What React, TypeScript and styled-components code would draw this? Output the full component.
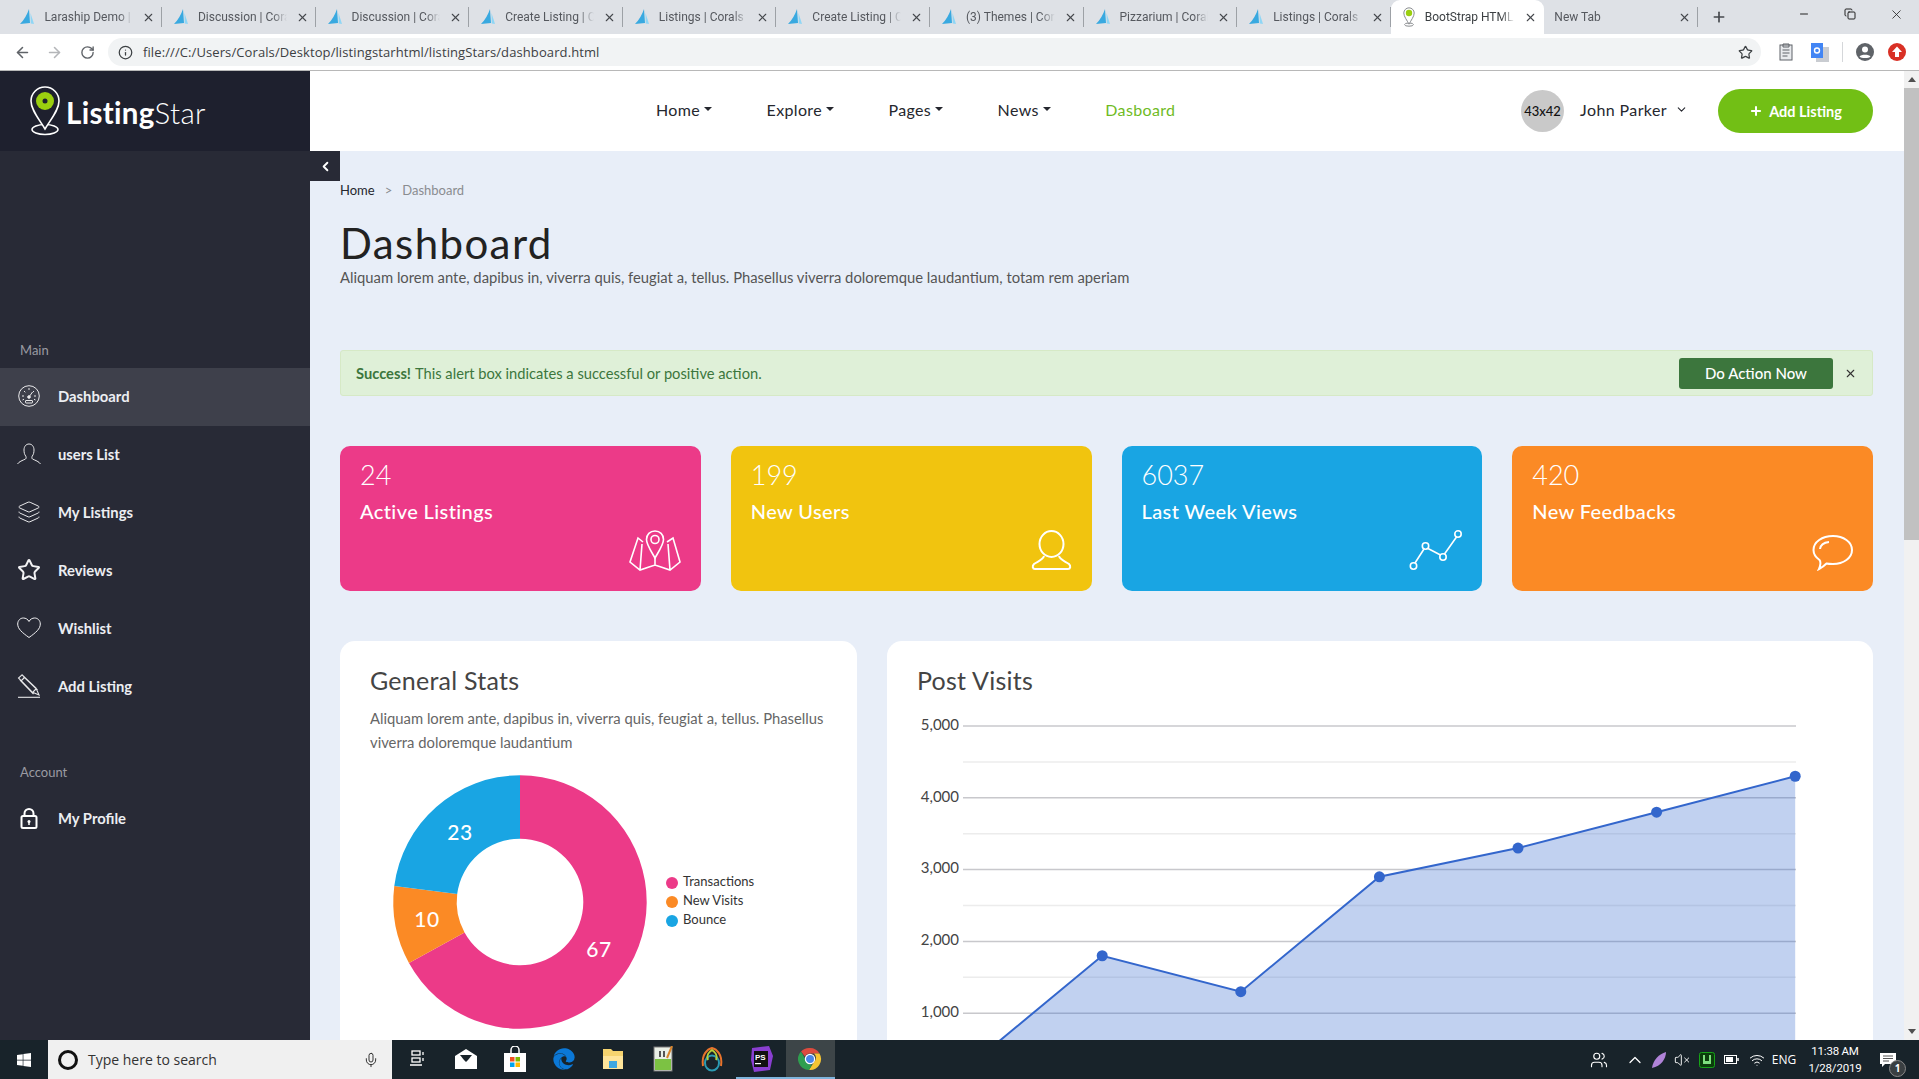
import React from 'react';
import styled, { createGlobalStyle } from 'styled-components';
import { ArrowLeft, ArrowRight, RotateCw, Info, Star, X, Plus, Minus, Copy, ChevronLeft, ChevronDown, ChevronUp, Mic, Layers, VolumeX, Wifi, Users } from 'lucide-react';
import { FaWindows, FaEdge } from 'react-icons/fa';

const GlobalStyle = createGlobalStyle`
  * { box-sizing: border-box; }
  html, body { margin: 0; height: 100%; overflow: hidden; }
  body { font-family: "Lato", "Liberation Sans", sans-serif; }
`;

const Screen = styled.div`
  height: 1079px;
  width: 1919px;
  display: flex;
  flex-direction: column;
  overflow: hidden;
`;

/* browser chrome */
const TabStrip = styled.div`
  height: 34px;
  background: #dee1e6;
  display: flex;
  padding-left: 8.4px;
  font-family: "Roboto", sans-serif;
`;
const Tab = styled.div<{ $active?: boolean; $plain?: boolean }>`
  width: 153.6px;
  height: 34px;
  display: flex;
  align-items: center;
  gap: 9px;
  padding: 0 7px 0 ${(p) => (p.$plain ? '10px' : '11px')};
  font-size: 12px;
  color: ${(p) => (p.$active ? '#3c4043' : '#55585e')};
  background: ${(p) => (p.$active ? '#fff' : 'transparent')};
  border-radius: ${(p) => (p.$active ? '9px 9px 0 0' : '0')};
  position: relative;
  &::after {
    content: '';
    position: absolute;
    right: 0;
    top: 7px;
    bottom: 7px;
    width: 1px;
    background: ${(p) => (p.$active ? 'transparent' : '#9da1a6')};
  }
`;
const TabTitle = styled.span`
  flex: 1;
  white-space: nowrap;
  overflow: hidden;
  -webkit-mask-image: linear-gradient(to right, #000 84%, transparent);
  mask-image: linear-gradient(to right, #000 84%, transparent);
`;
const NewTabBtn = styled.div`
  width: 42px;
  display: flex;
  align-items: center;
  justify-content: center;
  color: #45484d;
`;
const WindowControls = styled.div`
  margin-left: auto;
  display: flex;
  align-items: center;
  color: #222;
`;
const WindowBtn = styled.div`
  width: 46px;
  height: 28px;
  margin-top: -6px;
  display: flex;
  align-items: center;
  justify-content: center;
`;
const Toolbar = styled.div`
  height: 37px;
  background: #fff;
  border-bottom: 1px solid #b8b8b8;
  display: flex;
  align-items: center;
  padding: 0 0 0 13px;
  color: #5f6368;
`;
const ToolIcon = styled.div<{ $w?: number; $muted?: boolean }>`
  width: ${(p) => p.$w ?? 32}px;
  display: flex;
  justify-content: center;
  color: ${(p) => (p.$muted ? '#b4b6b9' : '#5f6368')};
`;
const Omnibox = styled.div`
  flex: none;
  width: 1653px;
  height: 28px;
  margin-left: 11px;
  border-radius: 14px;
  background: #f1f3f4;
  display: flex;
  align-items: center;
  padding: 0 8px 0 10px;
  gap: 10px;
  font: 13px "Open Sans", sans-serif;
  letter-spacing: 0.1px;
  color: #3c4043;
`;
const Url = styled.span`
  flex: 1;
`;
const ToolSep = styled.div`
  width: 1px;
  height: 20px;
  background: #d5d7da;
  margin: 0 8px 0 13px;
`;

/* page */
const Page = styled.div`
  flex: 1;
  min-height: 0;
  display: flex;
  overflow: hidden;
`;
const Sidebar = styled.aside`
  width: 310px;
  flex: none;
  background: #282a36;
`;
const LogoBar = styled.div`
  height: 80px;
  background: #1e202e;
  display: flex;
  align-items: center;
  padding-left: 30px;
  gap: 6px;
`;
const LogoText = styled.div`
  color: #fff;
  font-size: 29.5px;
  font-weight: 700;
  margin-top: 3px;
  letter-spacing: 0.3px;
  span {
    font-weight: 300;
  }
`;
const SideNav = styled.nav`
  padding-top: 190px;
`;
const SideLabel = styled.div<{ $gap?: number }>`
  height: 20px;
  line-height: 19px;
  margin: ${(p) => p.$gap ?? 0}px 0 7px;
  padding-left: 20px;
  font-size: 13px;
  color: #9a9ba2;
`;
const SideItem = styled.a<{ $active?: boolean }>`
  height: 58px;
  display: flex;
  align-items: center;
  padding: 0 0 2px 17px;
  gap: 17px;
  font-size: 14.8px;
  font-weight: 700;
  color: #eceef2;
  background: ${(p) => (p.$active ? '#3e404b' : 'transparent')};
  svg {
    width: 24px;
    height: 24px;
    flex: none;
  }
`;
const Main = styled.div`
  flex: 1;
  min-width: 0;
  background: #e8eef8;
  display: flex;
  flex-direction: column;
  position: relative;
`;
const TopBar = styled.header`
  height: 80px;
  flex: none;
  background: #fff;
  display: flex;
  align-items: center;
  padding: 0 46px 0 346px;
`;
const NavList = styled.div`
  display: flex;
  align-items: center;
  gap: 54.5px;
  flex: 1;
  margin-bottom: 4px;
`;
const NavItem = styled.a<{ $green?: boolean }>`
  display: flex;
  align-items: center;
  gap: 4px;
  font-size: 16px;
  letter-spacing: 0.35px;
  color: ${(p) => (p.$green ? '#6fbb1f' : '#25272e')};
`;
const Caret = styled.i`
  width: 0;
  height: 0;
  border-left: 4px solid transparent;
  border-right: 4px solid transparent;
  border-top: 4px solid #25272e;
`;
const Avatar = styled.div`
  width: 43px;
  height: 42px;
  border-radius: 50%;
  background: #c9c9c9;
  color: #111;
  font-size: 13px;
  font-weight: 500;
  display: flex;
  align-items: center;
  justify-content: center;
`;
const UserName = styled.div`
  display: flex;
  align-items: center;
  gap: 8px;
  margin: 0 30px 4px 16px;
  font-size: 16px;
  letter-spacing: 0.4px;
  color: #25272e;
`;
const AddButton = styled.button`
  width: 155px;
  height: 44px;
  border: 0;
  border-radius: 22px;
  background: #72bf15;
  color: #fff;
  font: 700 14.5px "Lato", sans-serif;
  display: flex;
  align-items: center;
  justify-content: center;
  gap: 6px;
`;
const Toggle = styled.button`
  position: absolute;
  left: 0;
  top: 80px;
  width: 30px;
  height: 30px;
  border: 0;
  padding: 0;
  background: #282a36;
  color: #fff;
  display: flex;
  align-items: center;
  justify-content: center;
`;
const Content = styled.main`
  flex: 1;
  min-height: 0;
  overflow: hidden;
  padding: 29px 46px 0 30px;
`;
const Breadcrumb = styled.div`
  height: 20px;
  line-height: 20px;
  display: flex;
  gap: 10px;
  font-size: 13px;
  color: #8a8c90;
  b {
    font-weight: 400;
    color: #25272e;
  }
`;
const Title = styled.h1`
  margin: 18px 0 0;
  font-size: 42px;
  line-height: 50px;
  font-weight: 400;
  letter-spacing: 1.4px;
  color: #222;
`;
const Sub = styled.p`
  margin: -1px 0 0;
  line-height: 20px;
  font-size: 14.8px;
  color: #555;
`;
const Alert = styled.div`
  margin-top: 63px;
  height: 46px;
  display: flex;
  align-items: center;
  padding: 0 15px;
  background: #dff0d8;
  border: 1px solid #d6e9c6;
  border-radius: 3px;
  font-size: 14.7px;
  color: #3c763d;
  b {
    margin-right: 4px;
  }
`;
const AlertText = styled.div`
  flex: 1;
`;
const AlertBtn = styled.button`
  width: 154px;
  height: 31px;
  border: 0;
  border-radius: 3px;
  background: #3c763d;
  color: #fff;
  font: 500 15px "Lato", sans-serif;
  margin-right: 11px;
`;
const StatGrid = styled.div`
  margin-top: 50px;
  display: grid;
  grid-template-columns: repeat(4, 1fr);
  gap: 30px;
`;
const StatCard = styled.div<{ $bg: string }>`
  height: 145px;
  border-radius: 10px;
  background: ${(p) => p.$bg};
  color: #fff;
  padding: 11px 20px 20px;
  display: flex;
  flex-direction: column;
`;
const StatNum = styled.div`
  font-size: 27px;
  line-height: 36px;
  font-weight: 300;
`;
const StatLabel = styled.div`
  margin-top: 3px;
  font-size: 20px;
  line-height: 30px;
  font-weight: 500;
  letter-spacing: 0.4px;
`;
const StatIcon = styled.svg<{ $w: number; $h?: number; $stroke?: number }>`
  margin-top: auto;
  align-self: flex-end;
  width: ${(p) => p.$w}px;
  height: ${(p) => p.$h ?? 41}px;
  fill: none;
  stroke: #fff;
  stroke-width: ${(p) => p.$stroke ?? 1.6};
`;
const ChartGrid = styled.div`
  margin-top: 50px;
  display: grid;
  grid-template-columns: 517px 986px;
  gap: 30px;
`;
const ChartCard = styled.section`
  height: 520px;
  background: #fff;
  border-radius: 15px;
  padding-top: 24px;
`;
const ChartTitle = styled.h3`
  margin: 0;
  padding-left: 30px;
  font-size: 25px;
  line-height: 30px;
  font-weight: 400;
  letter-spacing: 0.25px;
  color: #444;
`;
const ChartText = styled.p`
  margin: 11px 0 0;
  padding: 0 30px;
  font-size: 14.8px;
  line-height: 24px;
  color: #666;
`;
const ChartSvg = styled.svg`
  display: block;
  margin-top: 5px;
  font-family: "Lato", sans-serif;
`;
const Scrollbar = styled.div`
  width: 15px;
  background: #f1f1f1;
  display: flex;
  flex-direction: column;
  align-items: center;
  justify-content: space-between;
  position: absolute;
  right: 0;
  top: 0;
  bottom: 0;
`;
const ScrollThumb = styled.div`
  position: absolute;
  top: 17px;
  left: 0;
  width: 15px;
  height: 452px;
  background: #c1c1c1;
`;
const ScrollArrow = styled.i<{ $down?: boolean }>`
  margin: 6px 0;
  width: 0;
  height: 0;
  border-left: 4px solid transparent;
  border-right: 4px solid transparent;
  ${(p) => (p.$down ? 'border-top: 5px solid #505050;' : 'border-bottom: 5px solid #505050;')}
`;

/* windows taskbar */
const Taskbar = styled.footer`
  height: 39px;
  flex: none;
  background: #18232a;
  display: flex;
  align-items: stretch;
  color: #fff;
  font-family: "Open Sans", sans-serif;
`;
const StartBtn = styled.div`
  width: 48px;
  display: flex;
  align-items: center;
  justify-content: center;
`;
const SearchBox = styled.div`
  width: 344px;
  background: #f0f0f0;
  color: #333;
  display: flex;
  align-items: center;
  font-size: 14px;
  padding: 0 13px 0 10px;
  gap: 10px;
  span {
    flex: 1;
  }
`;
const Cortana = styled.i`
  width: 20px;
  height: 20px;
  border-radius: 50%;
  border: 3px solid #111;
`;
const TaskApps = styled.div`
  display: flex;
`;
const TaskApp = styled.div<{ $active?: boolean; $open?: boolean }>`
  width: 49.2px;
  display: flex;
  align-items: center;
  justify-content: center;
  background: ${(p) => (p.$active ? '#3d4548' : 'transparent')};
  border-bottom: 2px solid ${(p) => (p.$open ? '#7fb4dc' : 'transparent')};
`;
const Tray = styled.div`
  margin-left: auto;
  display: flex;
  align-items: center;
`;
const TrayIcon = styled.div<{ $w?: number }>`
  width: ${(p) => p.$w ?? 24}px;
  display: flex;
  justify-content: center;
  font-size: 12px;
`;
const Clock = styled.div`
  width: 60px;
  margin-left: 6px;
  text-align: center;
  font: 11.5px/17px "Roboto", sans-serif;
  letter-spacing: -0.2px;
`;
const Notify = styled.div`
  width: 46px;
  margin-right: 8px;
  display: flex;
  justify-content: center;
  position: relative;
`;
const NotifyBadge = styled.i`
  position: absolute;
  left: 24px;
  top: 9px;
  width: 17px;
  height: 17px;
  border-radius: 50%;
  background: #3a3f42;
  border: 1px solid #888;
  font: 700 10px/15px "Open Sans", sans-serif;
  text-align: center;
`;

const tabs = ['Laraship Demo | Corals', 'Discussion | Corals', 'Discussion | Corals', 'Create Listing | Corals', 'Listings | Corals', 'Create Listing | Corals', '(3) Themes | Corals', 'Pizzarium | Corals', 'Listings | Corals'];

const SailIcon = () => (
  <svg width="16" height="18" viewBox="0 0 16 18">
    <path d="M10 1 L11 15 L1 16 Q7 10 10 1Z" fill="#39a9e0" />
    <path d="M11.5 5 L15 16 L11.7 15.5Z" fill="#8fd6f5" />
  </svg>
);
const PinIcon = () => (
  <svg width="30" height="50" viewBox="0 0 30 50" fill="none">
    <ellipse cx="15" cy="43.5" rx="13" ry="5" stroke="#fff" strokeWidth="1.5" />
    <path d="M15 1C7 1 1 7.5 1 15c0 9 8 18 14 28 6-10 14-19 14-28C29 7.5 23 1 15 1Z" fill="#1e202e" stroke="#fff" strokeWidth="1.6" />
    <circle cx="15" cy="15" r="9" fill="#9bcf0f" />
    <circle cx="15" cy="15" r="2.5" fill="#1e202e" />
  </svg>
);
const TabPinIcon = () => (
  <svg width="14" height="20" viewBox="0 0 30 50" fill="none">
    <ellipse cx="15" cy="44" rx="11" ry="4" stroke="#8a8d90" strokeWidth="2.5" />
    <path d="M15 2C8 2 2 8 2 15c0 9 8 18 13 28 5-10 13-19 13-28C28 8 22 2 15 2Z" fill="#fff" stroke="#8a8d90" strokeWidth="2.5" />
    <circle cx="15" cy="15" r="8" fill="#9bcf0f" />
  </svg>
);
const GaugeIcon = () => (
  <svg viewBox="0 0 24 24" fill="none" stroke="#e8e8ea" strokeWidth="1">
    <circle cx="12" cy="12" r="10.3" />
    <path d="M12 4v2M5 12h2M19 12h-2M7 7l1.3 1.3M17 7l-1.3 1.3M5.5 16l1.5-.8M18.5 16l-1.5-.8M12 13l3.5-5" />
    <circle cx="12" cy="13" r="1.3" fill="#e8e8ea" />
    <rect x="8.5" y="16.5" width="7" height="2.5" rx=".5" />
  </svg>
);
const UserIcon = () => (
  <svg viewBox="0 0 24 24" fill="none" stroke="#e8e8ea" strokeWidth="1">
    <path d="M.5 22c1.500-2.500 5-3.500 8-5 .8-.5.8-2 .2-3C7.500 12.500 7 10.500 7 8c0-3.500 2-6 5-6s5 2.500 5 6c0 2.500-.5 4.500-1.700 6-.6 1-.6 2.500.2 3 3 1.500 6.500 2.500 8 5" />
  </svg>
);
const HeartIcon = () => (
  <svg viewBox="0 0 24 24" fill="none" stroke="#f2f2f4" strokeWidth="1">
    <path d="M12 21.500C5 16.500.7 12.800.7 8 .7 4.500 3.300 2 6.300 2c2.500 0 4.600 1.300 5.700 3.500C13.100 3.300 15.200 2 17.700 2c3 0 5.600 2.500 5.600 6 0 4.800-4.300 8.500-11.300 13.500Z" />
  </svg>
);
const PencilIcon = () => (
  <svg viewBox="0 0 24 24" fill="none" stroke="#e8e8ea" strokeWidth="1.1">
    <path d="M5 .8 1.500 4 15 18l7 3-3-7L5 .8ZM3 6 16.500 20M6.500 2.500 20.500 16M7.500 3.500 4 7M15.500 18.500l3.500-3.500" />
    <path d="M1 23.300h22" />
  </svg>
);
const LockIcon = () => (
  <svg viewBox="0 0 24 24" fill="none" stroke="#fff" strokeWidth="2">
    <rect x="4.500" y="10" width="15" height="12" rx="1.500" />
    <path d="M7.500 10V7.500a4.500 4.500 0 0 1 9 0V10" />
    <circle cx="12" cy="15.500" r="1.500" fill="#fff" stroke="none" />
    <path d="M12 16v3" strokeWidth="1.500" />
  </svg>
);
const MapPinIcon = () => (
  <StatIcon viewBox="0 0 52 41" $w={52}>
    <path d="M26 1c-5 0-8.500 3.500-8.500 8.500S22 21 26 28c4-7 8.500-13.500 8.500-18.500S31 1 26 1Z" />
    <circle cx="26" cy="9.500" r="4" />
    <path d="M14 12 9 8 1 32l10 8 9-3 6-2 6 2 9 3 10-8L44 8l-6 4M13 14l-2 26M39 14l2 26M26 28v7" />
  </StatIcon>
);
const PersonIcon = () => (
  <StatIcon viewBox="0 0 41 41" $w={41} $stroke={2}>
    <ellipse cx="20.500" cy="14" rx="12" ry="13" />
    <path d="M13 26c-1 4-6 5-10 8-2 2-1.500 5 1 5h33c2.500 0 3-3 1-5-4-3-9-4-10-8" />
  </StatIcon>
);
const TrendIcon = () => (
  <StatIcon viewBox="0 0 53 41" $w={53}>
    <circle cx="4.500" cy="36" r="3.200" />
    <circle cx="16.500" cy="16" r="3.200" />
    <circle cx="34" cy="27" r="3.200" />
    <circle cx="49" cy="4" r="3.200" />
    <path d="M6 33l9-14M19 18.500l12.500 6.500M35.500 24l12-17" />
  </StatIcon>
);
const BubbleIcon = () => (
  <StatIcon viewBox="0 0 41 36" $w={41} $h={36} $stroke={2}>
    <path d="M21 1C10 1 1.500 7 1.500 15c0 4 2.500 7.500 6 10 1.500 1.500 1 6-.5 9 3-1.500 6-4 7.500-5.500 2 .5 4.500.5 6.500.5 10.500 0 19-6 19-14S31.500 1 21 1Z" />
    <path d="M8 14c.5-4 4-6.500 9-7" />
  </StatIcon>
);

const arc = (a0: number, a1: number, R: number, r: number, cx: number, cy: number) => {
  const pt = (rad: number, a: number) => `${cx + rad * Math.sin(a)} ${cy - rad * Math.cos(a)}`;
  const big = a1 - a0 > Math.PI ? 1 : 0;
  return `M${pt(R, a0)}A${R} ${R} 0 ${big} 1 ${pt(R, a1)}L${pt(r, a1)}A${r} ${r} 0 ${big} 0 ${pt(r, a0)}Z`;
};
const slices = [
  { label: 'Transactions', share: 67, color: '#ec3a88', x: 259, y: 193 },
  { label: 'New Visits', share: 10, color: '#fb8a25', x: 87, y: 163 },
  { label: 'Bounce', share: 23, color: '#19a5e3', x: 120, y: 76 },
];

const Donut = () => {
  let acc = 0;
  return (
    <ChartSvg width="517" height="290" viewBox="0 0 517 290">
      {slices.map((s) => {
        const a0 = (acc / 100) * Math.PI * 2;
        acc += s.share;
        const a1 = (acc / 100) * Math.PI * 2;
        return <path key={s.label} d={arc(a0, a1, 126.7, 63.3, 180, 143)} fill={s.color} />;
      })}
      {slices.map((s) => (
        <text key={s.label} x={s.x} y={s.y} fill="#fff" fontSize="21" fontWeight="500" textAnchor="middle" dominantBaseline="middle" letterSpacing="0.5">
          {s.share}
        </text>
      ))}
      {slices.map((s, i) => (
        <g key={s.label}>
          <circle cx="332" cy={124 + i * 19} r="6" fill={s.color} />
          <text x="343" y={124 + i * 19} dominantBaseline="middle" fontSize="13" fill="#333">
            {s.label}
          </text>
        </g>
      ))}
    </ChartSvg>
  );
};

const visits = [200, 1800, 1300, 2900, 3300, 3800, 4300];
const px = (i: number) => 76.6 + 138.6 * i;
const py = (v: number) => 26 + (5000 - v) * 0.0718;

const AreaChart = () => {
  const pts = visits.map((v, i) => `${px(i)},${py(v)}`).join(' ');
  const grid = Array.from({ length: 11 }, (_, i) => i * 500);
  return (
    <ChartSvg width="986" height="400" viewBox="0 0 986 400">
      {grid.map((g) => (
        <line key={g} x1="76" x2="909" y1={py(g)} y2={py(g)} stroke={g % 1000 === 0 ? '#c8c8cc' : '#ececec'} strokeWidth="1.5" />
      ))}
      {[5000, 4000, 3000, 2000, 1000].map((g) => (
        <text key={g} x="72" y={py(g)} textAnchor="end" dominantBaseline="middle" fontSize="15" fill="#444">
          {g.toLocaleString('en-US')}
        </text>
      ))}
      <polygon points={`${pts} ${px(6)},${py(0)} ${px(0)},${py(0)}`} fill="#3366cc" fillOpacity="0.3" />
      <polyline points={pts} fill="none" stroke="#3366cc" strokeWidth="2" />
      {visits.map((v, i) => (
        <circle key={i} cx={px(i)} cy={py(v)} r="5.500" fill="#3366cc" />
      ))}
    </ChartSvg>
  );
};

const ChromeLogo = () => (
  <svg width="24" height="24" viewBox="0 0 24 24">
    <path d="M12 1a11 11 0 0 1 9.500 5.500H12A5.500 5.500 0 0 0 7 9.500L3 4.500A11 11 0 0 1 12 1Z" fill="#dd4b3e" />
    <path d="M21.500 6.500A11 11 0 0 1 11 23l5-8a5.500 5.500 0 0 0 0-8.500Z" fill="#f6c533" />
    <path d="M3 4.500l4.500 8A5.500 5.500 0 0 0 14 17.500L11 23A11 11 0 0 1 3 4.500Z" fill="#2f9e4f" />
    <circle cx="12" cy="12" r="4.600" fill="#4a86e8" stroke="#fff" strokeWidth="1.200" />
  </svg>
);

const App = () => (
  <Screen>
    <GlobalStyle />
    <TabStrip>
      {tabs.map((t, i) => (
        <Tab key={i}>
          <SailIcon />
          <TabTitle>{t}</TabTitle>
          <X size={13} color="#45484d" />
        </Tab>
      ))}
      <Tab $active>
        <TabPinIcon />
        <TabTitle>BootStrap HTML Template</TabTitle>
        <X size={13} color="#45484d" />
      </Tab>
      <Tab $plain>
        <TabTitle>New Tab</TabTitle>
        <X size={13} color="#45484d" />
      </Tab>
      <NewTabBtn>
        <Plus size={16} strokeWidth={2.5} />
      </NewTabBtn>
      <WindowControls>
        <WindowBtn>
          <Minus size={12} />
        </WindowBtn>
        <WindowBtn>
          <Copy size={12} />
        </WindowBtn>
        <WindowBtn>
          <X size={15} strokeWidth={1.3} />
        </WindowBtn>
      </WindowControls>
    </TabStrip>
    <Toolbar>
      <ToolIcon $w={18}>
        <ArrowLeft size={17} strokeWidth={2.2} />
      </ToolIcon>
      <ToolIcon $w={46} $muted>
        <ArrowRight size={17} strokeWidth={2.2} />
      </ToolIcon>
      <ToolIcon $w={20}>
        <RotateCw size={15} strokeWidth={2.2} />
      </ToolIcon>
      <Omnibox>
        <Info size={15} />
        <Url>file:///C:/Users/Corals/Desktop/listingstarhtml/listingStars/dashboard.html</Url>
        <Star size={15} />
      </Omnibox>
      <ToolIcon $w={50}>
        <svg width="14" height="18" viewBox="0 0 14 18" fill="none" stroke="#5f6368">
          <rect x="1" y="2" width="12" height="15" fill="#e8eaed" />
          <path d="M4 1h6v3H4zM3.500 7h7M3.500 10h7M3.500 13h5" />
        </svg>
      </ToolIcon>
      <ToolIcon $w={18}>
        <svg width="18" height="19" viewBox="0 0 18 19">
          <rect x="5" y="4" width="13" height="15" fill="#c9ccd1" />
          <rect x="0" y="0" width="12" height="15" fill="#4285f4" />
          <circle cx="6" cy="7.500" r="2.500" fill="none" stroke="#fff" strokeWidth="1.400" />
        </svg>
      </ToolIcon>
      <ToolSep />
      <ToolIcon $w={28}>
        <svg width="18" height="18" viewBox="0 0 18 18">
          <circle cx="9" cy="9" r="9" fill="#5f6368" />
          <circle cx="9" cy="6.500" r="3" fill="#fff" />
          <path d="M3.500 13.500c1.500-2.500 9.500-2.500 11 0-1.500 2-9.500 2-11 0Z" fill="#fff" />
        </svg>
      </ToolIcon>
      <ToolIcon $w={36}>
        <svg width="18" height="18" viewBox="0 0 18 18">
          <circle cx="9" cy="9" r="9" fill="#d93025" />
          <path d="M9 3.500 14 9h-3v5H7V9H4Z" fill="#fff" />
        </svg>
      </ToolIcon>
    </Toolbar>
    <Page>
      <Sidebar>
        <LogoBar>
          <PinIcon />
          <LogoText>
            Listing<span>Star</span>
          </LogoText>
        </LogoBar>
        <SideNav>
          <SideLabel>Main</SideLabel>
          <SideItem $active>
            <GaugeIcon />
            Dashboard
          </SideItem>
          <SideItem>
            <UserIcon />
            users List
          </SideItem>
          <SideItem>
            <Layers strokeWidth={1} color="#e8e8ea" />
            My Listings
          </SideItem>
          <SideItem>
            <Star strokeWidth={2} color="#f2f2f4" />
            Reviews
          </SideItem>
          <SideItem>
            <HeartIcon />
            Wishlist
          </SideItem>
          <SideItem>
            <PencilIcon />
            Add Listing
          </SideItem>
          <SideLabel $gap={47}>Account</SideLabel>
          <SideItem>
            <LockIcon />
            My Profile
          </SideItem>
        </SideNav>
      </Sidebar>
      <Main>
        <TopBar>
          <NavList>
            <NavItem>
              Home <Caret />
            </NavItem>
            <NavItem>
              Explore <Caret />
            </NavItem>
            <NavItem>
              Pages <Caret />
            </NavItem>
            <NavItem>
              News <Caret />
            </NavItem>
            <NavItem $green>Dasboard</NavItem>
          </NavList>
          <Avatar>43x42</Avatar>
          <UserName>
            John Parker <ChevronDown size={13} />
          </UserName>
          <AddButton>
            <Plus size={14} strokeWidth={3.5} /> Add Listing
          </AddButton>
        </TopBar>
        <Toggle>
          <ChevronLeft size={15} strokeWidth={3} />
        </Toggle>
        <Content>
          <Breadcrumb>
            <b>Home</b>
            <span>&gt;</span>
            <span>Dashboard</span>
          </Breadcrumb>
          <Title>Dashboard</Title>
          <Sub>Aliquam lorem ante, dapibus in, viverra quis, feugiat a, tellus. Phasellus viverra doloremque laudantium, totam rem aperiam</Sub>
          <Alert>
            <AlertText>
              <b>Success!</b>This alert box indicates a successful or positive action.
            </AlertText>
            <AlertBtn>Do Action Now</AlertBtn>
            <X size={13} strokeWidth={2} color="#333" />
          </Alert>
          <StatGrid>
            <StatCard $bg="#ec3a88">
              <StatNum>24</StatNum>
              <StatLabel>Active Listings</StatLabel>
              <MapPinIcon />
            </StatCard>
            <StatCard $bg="#f1c40f">
              <StatNum>199</StatNum>
              <StatLabel>New Users</StatLabel>
              <PersonIcon />
            </StatCard>
            <StatCard $bg="#19a5e3">
              <StatNum>6037</StatNum>
              <StatLabel>Last Week Views</StatLabel>
              <TrendIcon />
            </StatCard>
            <StatCard $bg="#fb8a25">
              <StatNum>420</StatNum>
              <StatLabel>New Feedbacks</StatLabel>
              <BubbleIcon />
            </StatCard>
          </StatGrid>
          <ChartGrid>
            <ChartCard>
              <ChartTitle>General Stats</ChartTitle>
              <ChartText>Aliquam lorem ante, dapibus in, viverra quis, feugiat a, tellus. Phasellus viverra doloremque laudantium</ChartText>
              <Donut />
            </ChartCard>
            <ChartCard>
              <ChartTitle>Post Visits</ChartTitle>
              <AreaChart />
            </ChartCard>
          </ChartGrid>
        </Content>
        <Scrollbar>
          <ScrollArrow />
          <ScrollThumb />
          <ScrollArrow $down />
        </Scrollbar>
      </Main>
    </Page>
    <Taskbar>
      <StartBtn>
        <FaWindows size={16} />
      </StartBtn>
      <SearchBox>
        <Cortana />
        <span>Type here to search</span>
        <Mic size={16} strokeWidth={1.5} color="#333" />
      </SearchBox>
      <TaskApps>
        <TaskApp>
          <svg width="16" height="18" viewBox="0 0 16 18" fill="none" stroke="#fff" strokeWidth="1.300">
            <rect x="3" y="1" width="8" height="4" />
            <rect x="3" y="8" width="8" height="4" />
            <path d="M1 15h12M14 2v3M14 8v3" />
          </svg>
        </TaskApp>
        <TaskApp>
          <svg width="24" height="22" viewBox="0 0 24 22">
            <path d="M1 8 12 1l11 7v13H1Z" fill="#fff" />
            <path d="M6 7h12l-4 5-2 2-2-2Z" fill="#18232a" />
          </svg>
        </TaskApp>
        <TaskApp>
          <svg width="24" height="26" viewBox="0 0 24 26">
            <path d="M8 7V4a4 4 0 0 1 8 0v3" fill="none" stroke="#fff" strokeWidth="1.500" />
            <rect x="1" y="7" width="22" height="19" fill="#fff" />
            <rect x="7" y="11" width="4.500" height="4.500" fill="#f25022" />
            <rect x="12.500" y="11" width="4.500" height="4.500" fill="#7fba00" />
            <rect x="7" y="16.500" width="4.500" height="4.500" fill="#00a4ef" />
            <rect x="12.500" y="16.500" width="4.500" height="4.500" fill="#ffb900" />
          </svg>
        </TaskApp>
        <TaskApp>
          <FaEdge size={22} color="#0b78d7" />
        </TaskApp>
        <TaskApp>
          <svg width="22" height="22" viewBox="0 0 22 22">
            <path d="M1 1h8l2 2h10v18H1Z" fill="#f6d46f" />
            <rect x="1" y="8" width="20" height="13" fill="#ffe59a" />
            <rect x="7" y="13" width="8" height="7" fill="#3fa7e0" />
          </svg>
        </TaskApp>
        <TaskApp>
          <svg width="22" height="26" viewBox="0 0 22 26">
            <rect x="2" y="1" width="18" height="24" fill="#e9efe6" stroke="#777" />
            <rect x="3" y="13" width="16" height="11" fill="#7cc243" />
            <path d="M7 5h2v6H7zM11 5h2v6h-2z" fill="#555" />
            <path d="M20 0l-5 12" stroke="#d8842b" strokeWidth="2" />
          </svg>
        </TaskApp>
        <TaskApp>
          <svg width="24" height="26" viewBox="0 0 24 26" fill="none" strokeWidth="2">
            <ellipse cx="12" cy="17" rx="7" ry="7.500" stroke="#2b9bb3" />
            <path d="M3 20C1 8 8 3 12 2c4 1 11 6 9 18" stroke="#e8732c" />
            <path d="M8 14c-2-4 1-8 4-10 3 2 6 6 4 10" stroke="#b9d138" />
          </svg>
        </TaskApp>
        <TaskApp $open>
          <svg width="24" height="26" viewBox="0 0 24 26">
            <path d="M3 2 20 0l4 10-3 14-16 2-3-12Z" fill="#8a3fd1" />
            <rect x="5" y="5" width="14" height="16" fill="#111" />
            <text x="6" y="14" fontSize="8" fontWeight="700" fill="#fff" fontFamily="Liberation Sans, sans-serif">
              PS
            </text>
            <rect x="6" y="17" width="6" height="1.200" fill="#fff" />
          </svg>
        </TaskApp>
        <TaskApp $active $open>
          <ChromeLogo />
        </TaskApp>
      </TaskApps>
      <Tray>
        <TrayIcon $w={40}>
          <Users size={18} strokeWidth={1.5} />
        </TrayIcon>
        <TrayIcon $w={32}>
          <ChevronUp size={20} strokeWidth={1.5} />
        </TrayIcon>
        <TrayIcon $w={16}>
          <svg width="16" height="18" viewBox="0 0 16 18">
            <path d="M1 17C2 9 8 3 15 1c0 7-5 14-14 16Z" fill="#b083d8" />
          </svg>
        </TrayIcon>
        <TrayIcon $w={30}>
          <VolumeX size={16} strokeWidth={1.4} />
        </TrayIcon>
        <TrayIcon $w={20}>
          <svg width="16" height="16" viewBox="0 0 16 16">
            <rect x=".5" y=".5" width="15" height="15" rx="2" fill="#0b3d0b" stroke="#17a517" />
            <path d="M4 3v9h8V3h-2v6H6V3Z" fill="#7ee07e" />
          </svg>
        </TrayIcon>
        <TrayIcon $w={28}>
          <svg width="15" height="9" viewBox="0 0 15 9" fill="none" stroke="#fff">
            <rect x=".5" y=".5" width="12" height="8" />
            <rect x="2" y="2" width="7" height="5" fill="#fff" stroke="none" />
            <path d="M14 3v3" strokeWidth="1.500" />
          </svg>
        </TrayIcon>
        <TrayIcon $w={24}>
          <Wifi size={16} strokeWidth={1.5} />
        </TrayIcon>
        <TrayIcon $w={30}>ENG</TrayIcon>
        <Clock>
          11:38 AM
          <br />
          1/28/2019
        </Clock>
        <Notify>
          <svg width="18" height="18" viewBox="0 0 18 18">
            <path d="M1 2h16v11H6l-3 3v-3H1Z" fill="#fff" />
            <path d="M4 5h10M4 7.500h10M4 10h6" stroke="#555" />
          </svg>
          <NotifyBadge>1</NotifyBadge>
        </Notify>
      </Tray>
    </Taskbar>
  </Screen>
);

export default App;
